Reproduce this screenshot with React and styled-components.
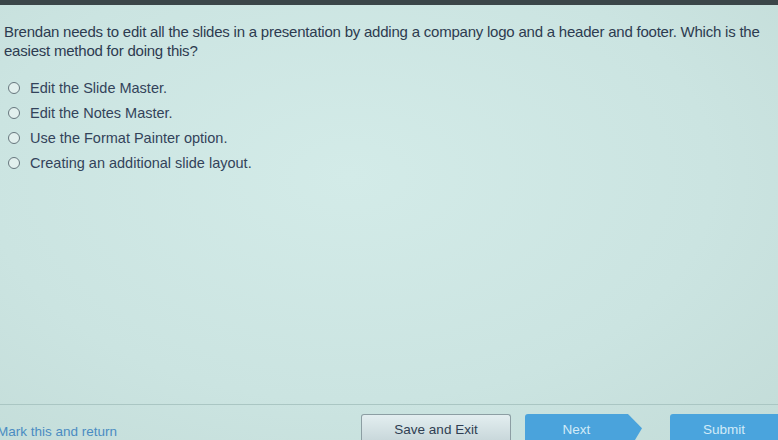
import styled, { createGlobalStyle } from "styled-components";

const GlobalStyle = createGlobalStyle`
  html, body {
    margin: 0;
    padding: 0;
  }
  body {
    background: #cce5e2;
    font-family: "Liberation Sans", Arial, sans-serif;
  }
`;

const options = [
  "Edit the Slide Master.",
  "Edit the Notes Master.",
  "Use the Format Painter option.",
  "Creating an additional slide layout.",
];

const Page = styled.div`
  width: 778px;
  height: 440px;
  display: flex;
  flex-direction: column;
  overflow: hidden;
  background: radial-gradient(ellipse at 45% 40%, #d3ebe8 0%, #cbe4e1 60%, #c3dcd8 100%);
`;

const TopBar = styled.div`
  height: 5px;
  background: #3b4649;
  flex-shrink: 0;
`;

const Content = styled.div`
  flex: 1;
  padding: 17px 10px 0 4px;
`;

const Question = styled.p`
  margin: 0;
  font-size: 15px;
  line-height: 19px;
  color: #2d3b50;
  letter-spacing: -0.22px;
`;

const OptionList = styled.ul`
  list-style: none;
  margin: 19px 0 0;
  padding: 0 0 0 4px;
  display: flex;
  flex-direction: column;
  gap: 8px;
`;

const Option = styled.li`
  display: flex;
  align-items: center;
  gap: 10px;
  height: 17px;
  font-size: 14.5px;
  color: #33435a;
`;

const Radio = styled.span`
  width: 10px;
  height: 10px;
  border-radius: 50%;
  border: 1.5px solid #66767d;
  background: #e2f0ee;
  flex-shrink: 0;
`;

const Footer = styled.div`
  height: 35px;
  border-top: 1px solid #aac6c3;
  display: flex;
  align-items: flex-end;
  flex-shrink: 0;
`;

const MarkLink = styled.a`
  font-size: 13.5px;
  color: #4a8cc2;
  margin-left: -3px;
  margin-bottom: 1px;
  width: 364px;
`;

const Button = styled.div`
  height: 26px;
  padding-top: 4px;
  display: flex;
  align-items: center;
  justify-content: center;
  font-size: 13.5px;
  box-sizing: border-box;
`;

const SaveButton = styled(Button)`
  width: 150px;
  border: 1px solid #8c9ea3;
  border-bottom: none;
  border-radius: 3px 3px 0 0;
  background: linear-gradient(#e3eef0, #c9d8db);
  color: #2f3e52;
`;

const NextButton = styled(Button)`
  width: 117px;
  margin-left: 14px;
  background: #4aa3dc;
  color: #d2ebf8;
  padding-right: 14px;
  clip-path: polygon(0 0, 88% 0, 100% 55%, 94% 100%, 0 100%);
  border-radius: 3px 0 0 0;
`;

const SubmitButton = styled(Button)`
  width: 108px;
  margin-left: auto;
  background: #4aa4dd;
  color: #d2ebf8;
  border-radius: 3px 0 0 0;
`;

export default function App() {
  return (
    <>
      <GlobalStyle />
      <Page>
        <TopBar />
        <Content>
          <Question>
            Brendan needs to edit all the slides in a presentation by adding a
            company logo and a header and footer. Which is the easiest method
            for doing this?
          </Question>
          <OptionList>
            {options.map((o) => (
              <Option key={o}>
                <Radio />
                {o}
              </Option>
            ))}
          </OptionList>
        </Content>
        <Footer>
          <MarkLink>Mark this and return</MarkLink>
          <SaveButton>Save and Exit</SaveButton>
          <NextButton>Next</NextButton>
          <SubmitButton>Submit</SubmitButton>
        </Footer>
      </Page>
    </>
  );
}
